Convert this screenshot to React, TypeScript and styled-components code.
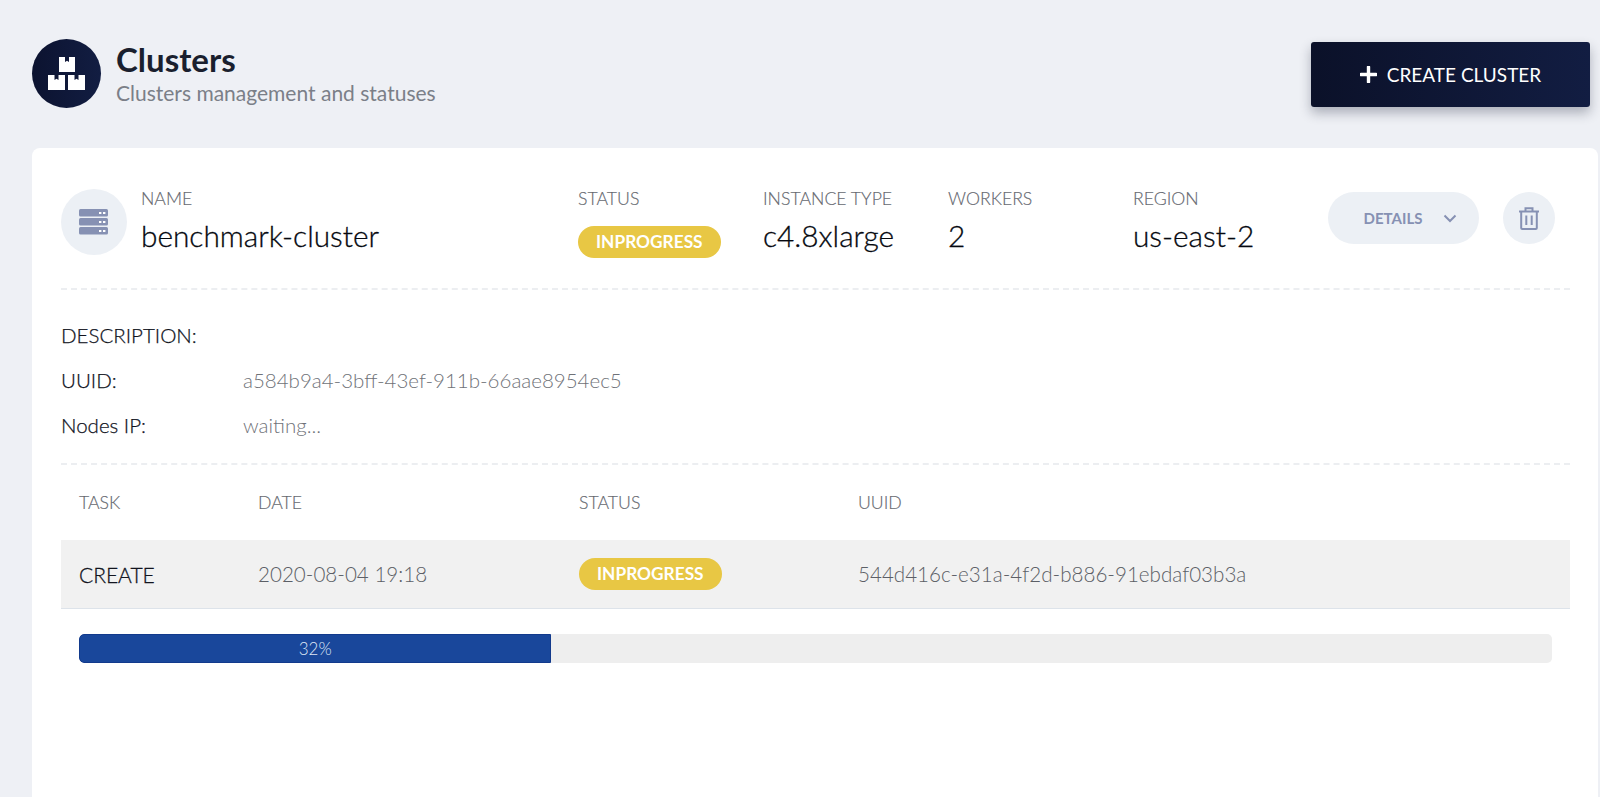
import { FC } from "react";
import styled, { createGlobalStyle } from "styled-components";

const GlobalStyle = createGlobalStyle`
  html, body {
    margin: 0;
    height: 100%;
    overflow: hidden;
    background-color: #eef0f5;
    font-family: Lato, "Liberation Sans", sans-serif;
  }
`;

const BoxesIcon: FC = () => (
  <svg width="37" height="33" viewBox="0 0 37 33" fill="#fff">
    <path d="M11 0h6v5l2-1.200 2 1.200V0h6v15H11z" />
    <path d="M0 18h6.500v5l2-1.200 2 1.200v-5H17v15H0z" />
    <path d="M20 18h6.500v5l2-1.200 2 1.200v-5H37v15H20z" />
  </svg>
);

const ServerIcon: FC = () => (
  <svg width="30" height="26" viewBox="0 0 30 26">
    {[0, 9, 18].map((y) => (
      <g key={y}>
        <rect x="0" y={y} width="29" height="7.5" rx="1.5" fill="#8691b3" />
        <rect x="20" y={y + 3} width="2.4" height="2" fill="#fff" />
        <rect x="24" y={y + 3} width="2.4" height="2" fill="#fff" />
      </g>
    ))}
  </svg>
);

const PlusIcon: FC = () => (
  <svg width="17" height="17" viewBox="0 0 17 17">
    <path d="M8.5 1v15M1 8.5h15" stroke="#fff" strokeWidth="3.4" strokeLinecap="round" />
  </svg>
);

const ChevronIcon: FC = () => (
  <svg width="14" height="9" viewBox="0 0 14 9" fill="none">
    <path d="M1.5 1.5 7 7l5.5-5.500" stroke="#8691b3" strokeWidth="2" />
  </svg>
);

const TrashIcon: FC = () => (
  <svg width="20" height="23" viewBox="0 0 20 23" fill="none" stroke="#8691b3" strokeWidth="2">
    <path d="M0 4.500h20M6.500 4.500V1.200h7v3.300" />
    <path d="M2.200 4.500V21a1 1 0 0 0 1 1h13.600a1 1 0 0 0 1-1V4.500" />
    <path d="M7.300 8.500v9.500M12.700 8.500v9.500" />
  </svg>
);

const App: FC = () => {
  const progress = 32;

  return (
    <Page>
      <GlobalStyle />
      <Header>
        <TitleGroup>
          <LogoCircle>
            <BoxesIcon />
          </LogoCircle>
          <div>
            <Title>Clusters</Title>
            <Subtitle>Clusters management and statuses</Subtitle>
          </div>
        </TitleGroup>
        <CreateButton>
          <PlusIcon />
          CREATE CLUSTER
        </CreateButton>
      </Header>

      <Card>
        <Summary>
          <ServerCircle>
            <ServerIcon />
          </ServerCircle>
          <Field>
            <FieldLabel>NAME</FieldLabel>
            <FieldValue>benchmark-cluster</FieldValue>
          </Field>
          <Field>
            <FieldLabel>STATUS</FieldLabel>
            <SummaryBadge>INPROGRESS</SummaryBadge>
          </Field>
          <Field>
            <FieldLabel>INSTANCE TYPE</FieldLabel>
            <FieldValue>c4.8xlarge</FieldValue>
          </Field>
          <Field>
            <FieldLabel>WORKERS</FieldLabel>
            <FieldValue>2</FieldValue>
          </Field>
          <Field>
            <FieldLabel>REGION</FieldLabel>
            <FieldValue>us-east-2</FieldValue>
          </Field>
          <DetailsButton>
            DETAILS
            <ChevronIcon />
          </DetailsButton>
          <RoundButton>
            <TrashIcon />
          </RoundButton>
        </Summary>

        <Info>
          <InfoLabel>DESCRIPTION:</InfoLabel>
          <InfoValue />
          <InfoLabel>UUID:</InfoLabel>
          <InfoValue>a584b9a4-3bff-43ef-911b-66aae8954ec5</InfoValue>
          <InfoLabel>Nodes IP:</InfoLabel>
          <InfoValue>waiting...</InfoValue>
        </Info>

        <TableHead>
          <span>TASK</span>
          <span>DATE</span>
          <span>STATUS</span>
          <span>UUID</span>
        </TableHead>
        <TableRow>
          <TaskName>CREATE</TaskName>
          <span>2020-08-04 19:18</span>
          <div>
            <Badge>INPROGRESS</Badge>
          </div>
          <span>544d416c-e31a-4f2d-b886-91ebdaf03b3a</span>
        </TableRow>

        <ProgressTrack>
          <ProgressFill style={{ width: `calc(${progress}% + 1px)` }}>{progress}%</ProgressFill>
        </ProgressTrack>
      </Card>
    </Page>
  );
};

const Page = styled.div`
  box-sizing: border-box;
  height: 797px;
  padding: 39px 2px 0 32px;
  overflow: hidden;
`;

const Header = styled.header`
  display: flex;
  justify-content: space-between;
  align-items: flex-start;
  height: 69px;
  padding-right: 8px;
`;

const TitleGroup = styled.div`
  display: flex;
  align-items: center;
  gap: 15px;
`;

const LogoCircle = styled.div`
  display: flex;
  justify-content: center;
  align-items: center;
  width: 69px;
  height: 69px;
  border-radius: 50%;
  background: linear-gradient(90deg, #0c1330, #121d42);
`;

const Title = styled.h1`
  margin: 0;
  color: #1a1f2e;
  font-size: 33px;
  font-weight: 700;
  line-height: 38px;
`;

const Subtitle = styled.p`
  margin: 0;
  color: #7b7f88;
  font-size: 21px;
  line-height: 30px;
`;

const CreateButton = styled.button`
  display: flex;
  justify-content: center;
  align-items: center;
  gap: 10px;
  width: 279px;
  height: 65px;
  margin-top: 3px;
  border: none;
  border-radius: 3px;
  background: linear-gradient(90deg, #0b1129, #121d42);
  box-shadow: 0 6px 12px rgba(20, 25, 50, 0.3);
  color: #fff;
  font-family: inherit;
  font-size: 19px;
  cursor: pointer;
`;

const Card = styled.main`
  box-sizing: border-box;
  height: 700px;
  margin-top: 40px;
  padding: 41px 28px 0 29px;
  border-radius: 8px;
  background-color: #fff;
`;

const Summary = styled.section`
  display: grid;
  grid-template-columns: 80px 437px 185px 185px 185px 195px 175px 52px;
  align-items: flex-start;
  padding-bottom: 30px;
  border-bottom: 2px dashed #eceef1;
`;

const ServerCircle = styled.div`
  display: flex;
  justify-content: center;
  align-items: center;
  width: 66px;
  height: 66px;
  border-radius: 50%;
  background-color: #ecf0f5;
`;

const Field = styled.div`
  display: flex;
  flex-direction: column;
  align-items: flex-start;
`;

const FieldLabel = styled.span`
  margin-bottom: 8px;
  color: #65686f;
  font-size: 17.7px;
  font-weight: 300;
  line-height: 20px;
  -webkit-text-stroke: 0.15px #65686f;
`;

const FieldValue = styled.span`
  color: #05080f;
  font-size: 29.8px;
  font-weight: 300;
  line-height: 38px;
  -webkit-text-stroke: 0.3px #05080f;
`;

const Badge = styled.span`
  display: inline-block;
  padding: 0 18px;
  border-radius: 16px;
  background-color: #e8c744;
  color: #fff;
  font-size: 17.3px;
  font-weight: 700;
  line-height: 32px;
`;

const SummaryBadge = styled(Badge)`
  margin-top: 9px;
`;

const DetailsButton = styled.button`
  display: flex;
  justify-content: center;
  align-items: center;
  gap: 21px;
  width: 151px;
  height: 52px;
  margin-top: 3px;
  padding: 0 0 0 14px;
  border: none;
  border-radius: 26px;
  background-color: #ecf0f5;
  color: #8691b3;
  font-family: inherit;
  font-size: 15px;
  font-weight: 700;
  cursor: pointer;
`;

const RoundButton = styled.button`
  display: flex;
  justify-content: center;
  align-items: center;
  width: 52px;
  height: 52px;
  margin-top: 3px;
  padding: 0;
  border: none;
  border-radius: 50%;
  background-color: #ecf0f5;
  cursor: pointer;
`;

const Info = styled.section`
  display: grid;
  grid-template-columns: 182px 1fr;
  grid-auto-rows: 45px;
  align-items: center;
  padding: 22px 0 16px;
  border-bottom: 2px dashed #eceef1;
  font-size: 20.5px;
`;

const InfoLabel = styled.span`
  color: #10131d;
  font-weight: 300;
  -webkit-text-stroke: 0.25px #10131d;
`;

const InfoValue = styled.span`
  color: #6f7278;
  font-weight: 300;
`;

const TableHead = styled.div`
  display: grid;
  grid-template-columns: 179px 321px 279px 1fr;
  align-items: center;
  height: 75px;
  padding-left: 18px;
  color: #65686f;
  font-size: 17.7px;
  font-weight: 300;
  -webkit-text-stroke: 0.15px #65686f;
`;

const TableRow = styled.div`
  box-sizing: border-box;
  display: grid;
  grid-template-columns: 179px 321px 279px 1fr;
  align-items: center;
  height: 69px;
  padding-left: 18px;
  border-bottom: 1px solid #dde3ea;
  background-color: #f1f1f1;
  color: #5c5f66;
  font-size: 20.6px;
  font-weight: 300;
`;

const TaskName = styled.span`
  color: #12151f;
  font-size: 21px;
  -webkit-text-stroke: 0.3px #12151f;
`;

const ProgressTrack = styled.div`
  height: 29px;
  margin: 25px 18px 0;
  border-radius: 5px;
  background-color: #eeeeee;
  overflow: hidden;
`;

const ProgressFill = styled.div`
  box-sizing: border-box;
  height: 100%;
  border: 1px solid #123a8c;
  border-radius: 5px 0 0 5px;
  background-color: #19479b;
  color: #dfe6f5;
  font-size: 17px;
  font-weight: 300;
  line-height: 27px;
  text-align: center;
`;

export default App;
